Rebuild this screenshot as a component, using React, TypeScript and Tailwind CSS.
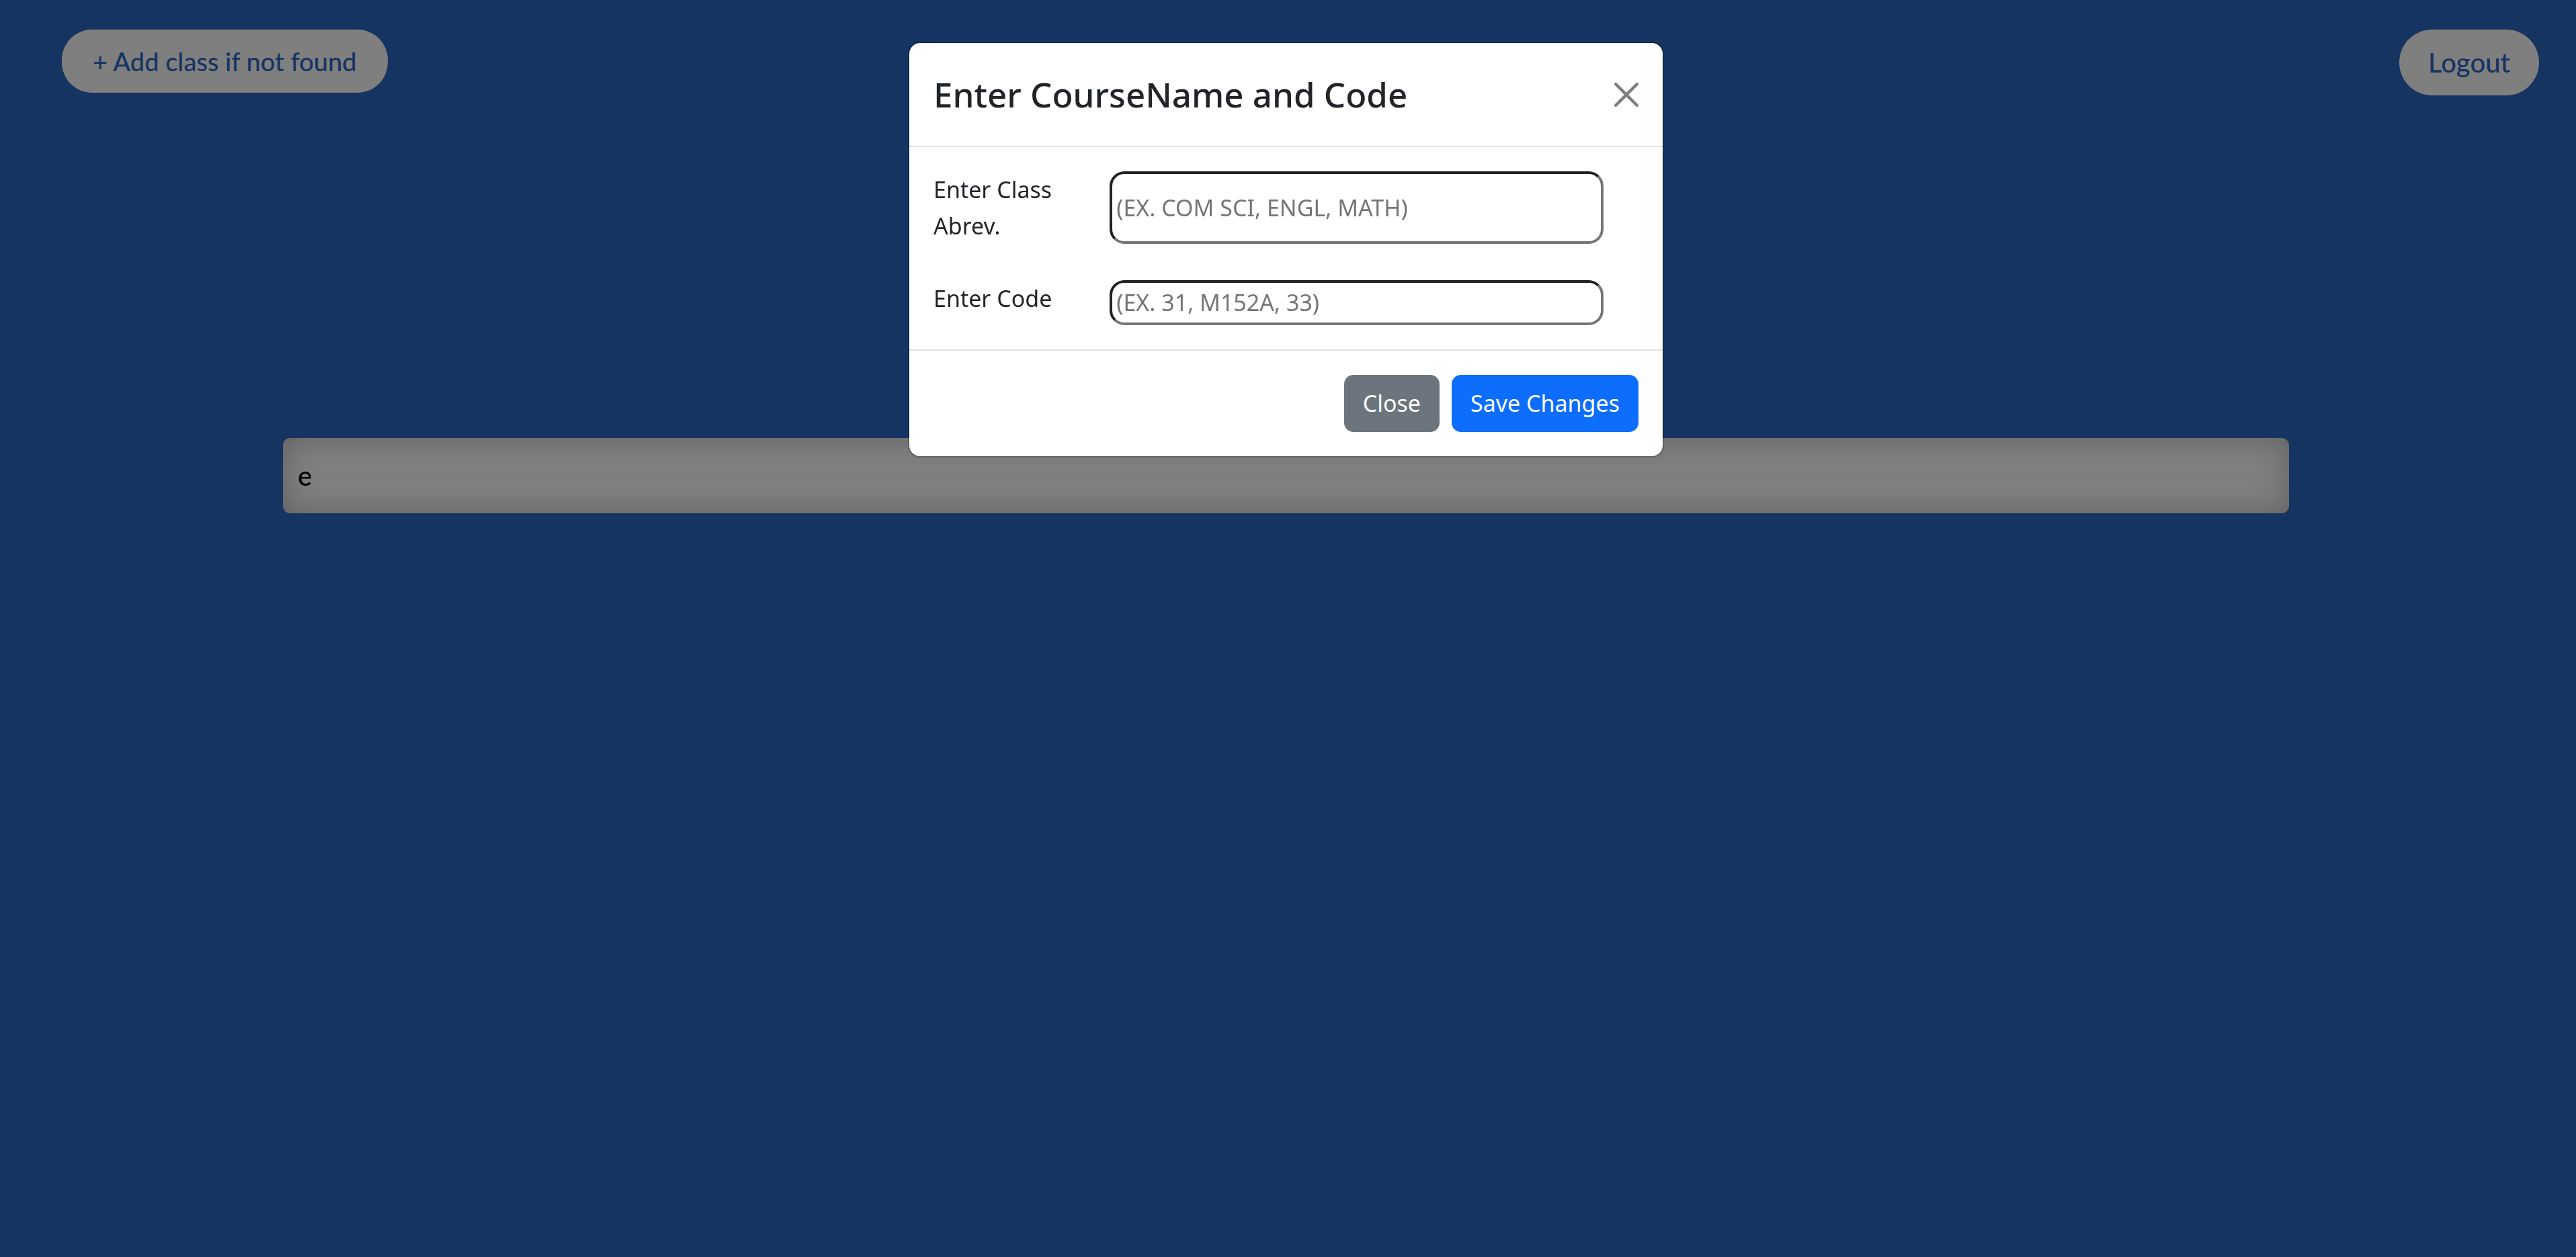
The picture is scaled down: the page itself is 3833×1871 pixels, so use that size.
import { useState } from 'react';

function CloseIcon() {
  return (
    <svg viewBox="0 0 16 16" className="size-9" fill="currentColor" aria-hidden="true">
      <path d="M.293.293a1 1 0 0 1 1.414 0L8 6.586 14.293.293a1 1 0 1 1 1.414 1.414L9.414 8l6.293 6.293a1 1 0 0 1-1.414 1.414L8 9.414l-6.293 6.293a1 1 0 0 1-1.414-1.414L6.586 8 .293 1.707a1 1 0 0 1 0-1.414z" />
    </svg>
  );
}

type FieldProps = { id: string; label: string; placeholder: string };

function Field({ id, label, placeholder }: FieldProps) {
  return (
    <div className="flex items-stretch">
      <label htmlFor={id} className="w-1/4 leading-[54px]">
        {label}
      </label>
      <input
        id={id}
        type="text"
        placeholder={placeholder}
        className="min-h-[67px] w-[70%] rounded-[22px] border-4 border-t-[#222222] border-r-[#767676] border-b-[#767676] border-l-[#222222] bg-white px-1.5 placeholder:text-[#757575]"
      />
    </div>
  );
}

function CourseDialog({ onClose }: { onClose: () => void }) {
  return (
    <div className="fixed inset-0 overflow-y-auto bg-black/50 pt-[62px] pr-1.5 font-['Noto_Sans',sans-serif] text-[#212529]">
      <div
        role="dialog"
        aria-modal="true"
        aria-labelledby="course-dialog-title"
        className="mx-auto w-full max-w-[1125px] rounded-[18px] border-2 border-black/20 bg-white bg-clip-padding text-[34px]"
      >
        <div className="flex items-center justify-between border-b-2 border-[#dee2e6] p-9">
          <h1 id="course-dialog-title" className="text-[51px] leading-[81px] font-medium">
            Enter CourseName and Code
          </h1>
          <button type="button" aria-label="Close dialog" onClick={onClose} className="text-black opacity-50">
            <CloseIcon />
          </button>
        </div>
        <div className="flex flex-col gap-[54px] p-9">
          <Field id="class-abrev" label="Enter Class Abrev." placeholder="(EX. COM SCI, ENGL, MATH)" />
          <Field id="class-code" label="Enter Code" placeholder="(EX. 31, M152A, 33)" />
        </div>
        <div className="flex justify-end gap-[18px] border-t-2 border-[#dee2e6] p-9 text-white">
          <button type="button" onClick={onClose} className="min-h-[85px] rounded-[14px] bg-[#6c757d] px-7">
            Close
          </button>
          <button type="button" onClick={onClose} className="min-h-[85px] rounded-[14px] bg-[#0d6efd] px-7">
            Save Changes
          </button>
        </div>
      </div>
    </div>
  );
}

export default function App() {
  const [open, setOpen] = useState(true);

  return (
    <div className="min-h-screen bg-[#2d68c4] pr-1.5 font-['Lato',sans-serif]">
      <header className="flex items-start justify-between pt-11 pr-[49px] pl-[92px] font-medium text-[#2d68c4]">
        <button
          type="button"
          onClick={() => setOpen(true)}
          className="rounded-[45px] bg-white px-[46px] py-5 text-[38px] leading-[54px]"
        >
          + Add class if not found
        </button>
        <button type="button" className="rounded-[50px] bg-white px-[43px] py-[22px] text-[40px] leading-[54px]">
          Logout
        </button>
      </header>
      <main className="pt-[510px]">
        <input
          type="text"
          aria-label="Search classes"
          defaultValue="e"
          className="mx-auto block h-28 w-[78%] rounded-[11px] bg-white px-[22px] text-[40px] font-medium text-black shadow-[inset_0_0_45px_rgba(0,0,0,0.25)]"
        />
      </main>
      {open && <CourseDialog onClose={() => setOpen(false)} />}
    </div>
  );
}
